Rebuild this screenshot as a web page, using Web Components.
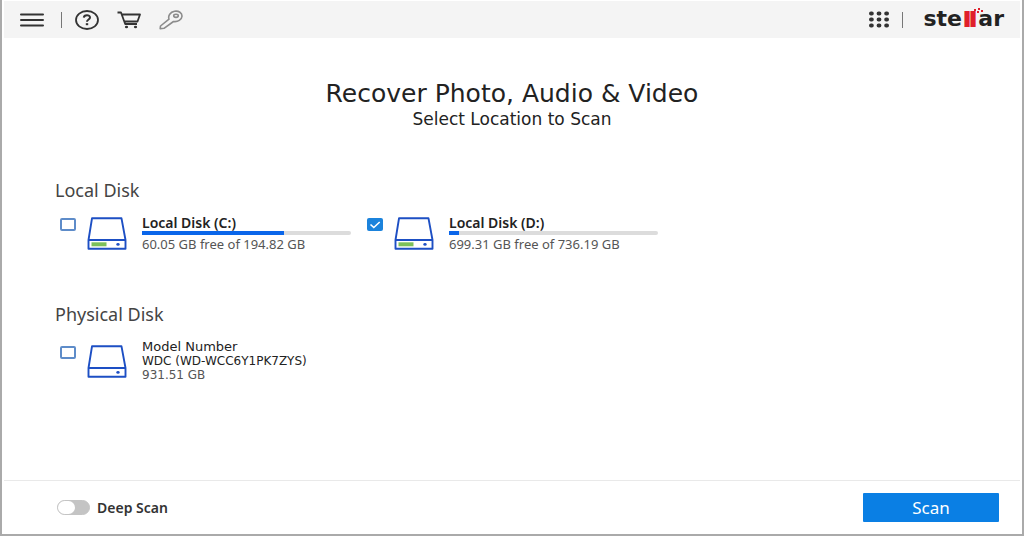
<!DOCTYPE html>
<html lang="en">
<head>
<meta charset="utf-8">
<title>Recover Photo, Audio &amp; Video</title>
<style>
    html, body {
        height: 100%;
        margin: 0;
    }
    body {
        --wide-font: "DejaVu Sans", sans-serif;
        font-family: "Noto Sans", "Open Sans", sans-serif;
        color: #222;
    }
</style>
</head>
<body>
<app-window>
    <tool-bar slot="top"></tool-bar>
    <page-heading>
        Recover Photo, Audio &amp; Video
        <span slot="sub">Select Location to Scan</span>
    </page-heading>
    <disk-section heading="Local Disk">
        <disk-item name="Local Disk (C:)" info="60.05 GB free of 194.82 GB" used="68"></disk-item>
        <disk-item name="Local Disk (D:)" info="699.31 GB free of 736.19 GB" used="5" checked></disk-item>
    </disk-section>
    <disk-section heading="Physical Disk">
        <disk-item name="Model Number" model="WDC (WD-WCC6Y1PK7ZYS)" info="931.51 GB"></disk-item>
    </disk-section>
    <toggle-switch slot="bottom">Deep Scan</toggle-switch>
    <scan-button slot="bottom">Scan</scan-button>
</app-window>

<script>
class AppWindow extends HTMLElement {
    constructor() {
        super();
        this.attachShadow({ mode: 'open' });
        this.shadowRoot.innerHTML = `
            <style>
                :host {
                    display: flex;
                    flex-direction: column;
                    box-sizing: border-box;
                    min-height: 100%;
                    padding: 1px 2px 0;
                    border: 1px solid #aaa;
                    border-width: 0 2px 2px;
                    background: #fff;
                }
                main {
                    flex: 1;
                    padding: 41px 51px 0;
                }
                footer {
                    display: flex;
                    justify-content: space-between;
                    align-items: center;
                    height: 53px;
                    padding: 0 21px 0 53px;
                    border-top: 1px solid #e9e9e9;
                }
            </style>
            <slot name="top"></slot>
            <main><slot></slot></main>
            <footer><slot name="bottom"></slot></footer>
        `;
    }
}

class ToolBar extends HTMLElement {
    constructor() {
        super();
        this.attachShadow({ mode: 'open' });
        this.shadowRoot.innerHTML = `
            <style>
                :host {
                    display: flex;
                    justify-content: space-between;
                    align-items: center;
                    height: 37px;
                    padding: 0 16px;
                    background: #f4f4f4;
                }
                .group {
                    display: flex;
                    align-items: center;
                }
                button {
                    display: flex;
                    padding: 0;
                    border: 0;
                    background: none;
                    color: #333;
                }
                svg {
                    display: block;
                    fill: none;
                    stroke: currentColor;
                }
                .key {
                    color: #8c8c8c;
                }
                .tools {
                    gap: 18px;
                }
                .sep {
                    width: 1px;
                    height: 16px;
                    margin: 0 13px 0 17px;
                    background: #777;
                }
                .right .sep {
                    margin: 0 20px 0 12px;
                }
                .logo {
                    position: relative;
                    color: #222;
                    font-family: var(--wide-font);
                    font-size: 22px;
                    font-weight: 700;
                    line-height: 24px;
                    text-decoration: none;
                }
                .logo b {
                    padding: 0 2px;
                    color: #e0202b;
                    font-size: 18px;
                    -webkit-text-stroke: 2px #e0202b;
                }
                .logo svg {
                    position: absolute;
                    top: 1px;
                    left: 51px;
                    fill: #e0202b;
                    stroke: none;
                }
            </style>
            <div class="group">
                <button aria-label="Menu">
                    <svg width="24" height="16" viewBox="0 0 24 16" stroke-width="2" stroke-linecap="round"><path d="M1 2.5h22M1 8h22M1 13.5h22"/></svg>
                </button>
                <span class="sep"></span>
                <div class="group tools">
                    <button aria-label="Help">
                        <svg width="24" height="20" viewBox="0 0 24 20" stroke-width="1.8"><ellipse cx="12" cy="10" rx="11" ry="9"/><path d="M8.8 7.6C9 4.5 15 4.4 15 7.5c0 2-3 2-3 4.3" stroke-width="2"/><path d="M12 13.2v2" stroke-width="2.4"/></svg>
                    </button>
                    <button aria-label="Buy">
                        <svg width="24" height="18" viewBox="0 0 24 18" stroke-width="1.8"><path d="M.5 1.5H4L8.2 13H20M5 3.5h18l-2.5 7H7.5" stroke-linejoin="round"/><ellipse cx="9.5" cy="16" rx="1.6" ry="1.3" fill="currentColor" stroke="none"/><ellipse cx="18.5" cy="16" rx="1.6" ry="1.3" fill="currentColor" stroke="none"/></svg>
                    </button>
                    <button class="key" aria-label="Activate">
                        <svg width="24" height="20" viewBox="0 0 24 20" stroke-width="1.6" stroke-linejoin="round"><path d="M10 9.2C8.8 5.8 11.3 2 15.5 1.3c4.2-.7 7.7 1.5 7.5 4.9-.2 3.5-4.2 6-8.5 5.3L5 18.3 1.2 18.7 1.5 16z"/><ellipse cx="17" cy="5.8" rx="2.3" ry="1.6"/></svg>
                    </button>
                </div>
            </div>
            <div class="group right">
                <button aria-label="Products">
                    <svg width="22" height="17" viewBox="0 0 22 17" stroke-width="4" stroke-linecap="round"><path d="M3 2.5h.8M10.6 2.5h.8M18.2 2.5h.8M3 8.5h.8M10.6 8.5h.8M18.2 8.5h.8M3 14.5h.8M10.6 14.5h.8M18.2 14.5h.8"/></svg>
                </button>
                <span class="sep"></span>
                <a class="logo" href="#">ste<b>ll</b>ar<svg width="9" height="6" viewBox="0 0 9 6"><path d="M0 1h2v2H0zM3 3h2v2H3zM4 0h2v2H4zM7 2h2v2H7z"/></svg></a>
            </div>
        `;
    }
}

class PageHeading extends HTMLElement {
    constructor() {
        super();
        this.attachShadow({ mode: 'open' });
        this.shadowRoot.innerHTML = `
            <style>
                :host {
                    display: block;
                    text-align: center;
                    margin-bottom: 51px;
                    font-family: var(--wide-font);
                }
                h1 {
                    margin: 0;
                    font-size: 25px;
                    font-weight: 400;
                    line-height: 30px;
                }
                p {
                    margin: 0;
                    font-size: 17px;
                    line-height: 20px;
                }
            </style>
            <h1><slot></slot></h1>
            <p><slot name="sub"></slot></p>
        `;
    }
}

class DiskSection extends HTMLElement {
    constructor() {
        super();
        this.attachShadow({ mode: 'open' });
    }

    connectedCallback() {
        this.shadowRoot.innerHTML = `
            <style>
                :host {
                    display: block;
                    margin-bottom: 53px;
                }
                h2 {
                    margin: 0 0 16px;
                    color: #444;
                    font-size: 18px;
                    font-weight: 400;
                    line-height: 20px;
                }
                .disks {
                    display: flex;
                    flex-wrap: wrap;
                    gap: 16px;
                    padding-left: 5px;
                }
            </style>
            <h2>${this.getAttribute('heading')}</h2>
            <div class="disks"><slot></slot></div>
        `;
    }
}

class DiskItem extends HTMLElement {
    constructor() {
        super();
        this.attachShadow({ mode: 'open' });
    }

    connectedCallback() {
        const used = this.getAttribute('used');
        const model = this.getAttribute('model');
        const local = used !== null;

        this.shadowRoot.innerHTML = `
            <style>
                :host {
                    display: block;
                    flex: 0 1 291px;
                }
                label {
                    display: flex;
                    align-items: center;
                }
                input {
                    appearance: none;
                    flex: none;
                    box-sizing: border-box;
                    width: 16px;
                    height: 13px;
                    margin: 0 11px 18px 0;
                    border: 2px solid #5e8cc9;
                    border-radius: 2px;
                    background: #fff;
                }
                input:checked {
                    border: 0;
                    background: #1b83dc url('data:image/svg+xml,<svg xmlns="http://www.w3.org/2000/svg" viewBox="0 0 16 13"><path d="M3.5 6.5l3.3 3L12.7 4" fill="none" stroke="white" stroke-width="1.6"/></svg>');
                }
                svg {
                    flex: none;
                    margin-right: 15px;
                }
                .text {
                    flex: 1;
                    min-width: 0;
                    font-size: 13px;
                    line-height: 14px;
                }
                .name {
                    display: block;
                    font-size: 14px;
                    font-weight: 600;
                }
                /* three tight lines, no bar between them */
                .physical {
                    font-family: var(--wide-font);
                    font-size: 12px;
                }
                .physical .name {
                    font-size: 13px;
                    font-weight: 400;
                }
                .model {
                    display: block;
                }
                .info {
                    display: block;
                    color: #555;
                }
                .bar {
                    display: block;
                    height: 4px;
                    margin: 1px 0 2px;
                    border-radius: 2px;
                    background: #dcdcdc;
                }
                .bar i {
                    display: block;
                    height: 4px;
                    background: #0a66ea;
                }
            </style>
            <label>
                <input type="checkbox" ${this.hasAttribute('checked') ? 'checked' : ''}>
                <svg width="40" height="33" viewBox="0 0 40 33" fill="none" stroke="#1d4fc4" stroke-width="1.9" stroke-linejoin="round">
                    <path d="M5 1.3h29.5L38.5 23v8.7h-37V23zM1.5 23h37"/>
                    ${local ? '<path d="M4.5 27.3h15" stroke="#7cc05a" stroke-width="4"/>' : ''}
                    <ellipse cx="31" cy="27.4" rx="1.7" ry="1.4" fill="#1d4fc4" stroke="none"/>
                </svg>
                <span class="text ${local ? '' : 'physical'}">
                    <span class="name">${this.getAttribute('name')}</span>
                    ${model ? `<span class="model">${model}</span>` : ''}
                    ${local ? `<span class="bar"><i style="width: ${used}%"></i></span>` : ''}
                    <span class="info">${this.getAttribute('info')}</span>
                </span>
            </label>
        `;
    }
}

class ToggleSwitch extends HTMLElement {
    constructor() {
        super();
        this.attachShadow({ mode: 'open' });
        this.shadowRoot.innerHTML = `
            <style>
                :host {
                    display: block;
                }
                label {
                    display: flex;
                    align-items: center;
                    gap: 7px;
                    color: #333;
                    font-size: 14px;
                    font-weight: 600;
                    line-height: 20px;
                }
                input {
                    appearance: none;
                    display: flex;
                    box-sizing: border-box;
                    width: 33px;
                    height: 15px;
                    margin: 0;
                    border: 1px solid #c4c4c4;
                    border-radius: 8px;
                    background: #c4c4c4;
                }
                input::before {
                    content: '';
                    width: 17px;
                    height: 13px;
                    border-radius: 8px;
                    background: #fff;
                }
                input:checked {
                    justify-content: flex-end;
                    background: #0a7fe4;
                }
            </style>
            <label><input type="checkbox"><slot></slot></label>
        `;
    }
}

class ScanButton extends HTMLElement {
    constructor() {
        super();
        this.attachShadow({ mode: 'open' });
        this.shadowRoot.innerHTML = `
            <style>
                :host {
                    display: block;
                }
                button {
                    display: block;
                    width: 136px;
                    height: 29px;
                    padding: 0;
                    border: 0;
                    border-radius: 1px;
                    background: #0a7fe4;
                    color: #fff;
                    font-family: inherit;
                    font-size: 17px;
                    line-height: 20px;
                }
            </style>
            <button><slot></slot></button>
        `;
    }
}

customElements.define('app-window', AppWindow);
customElements.define('tool-bar', ToolBar);
customElements.define('page-heading', PageHeading);
customElements.define('disk-section', DiskSection);
customElements.define('disk-item', DiskItem);
customElements.define('toggle-switch', ToggleSwitch);
customElements.define('scan-button', ScanButton);
</script>
</body>
</html>
